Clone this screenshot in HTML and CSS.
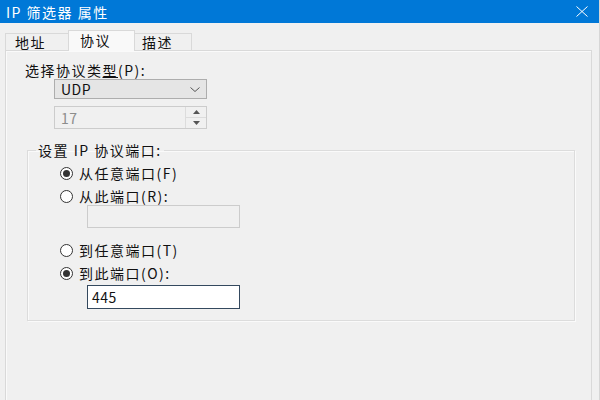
FILE: index.html
```html
<html lang="zh">
  <head>
    <meta charset="UTF-8" />
    <title>IP 筛选器 属性</title>
    <link rel="stylesheet" href="styles.css">
  </head>
  <body>
    <div class="window">
      <div class="titlebar">
        <span class="title">IP 筛选器 属性</span>
        <svg class="close" width="12" height="11" viewBox="0 0 12 11">
          <path d="M0.5 0.5 L11.5 10.5 M11.5 0.5 L0.5 10.5" stroke="#fff" stroke-width="1" fill="none" />
        </svg>
      </div>

      <div class="tabs">
        <div class="tab tab-first">地址</div>
        <div class="tab active">协议</div>
        <div class="tab tab-last">描述</div>
      </div>

      <div class="page">
        <div class="label">选择协议类<span class="key">型</span>(P):</div>

        <div class="combo">
          <span>UDP</span>
          <svg width="10" height="5" viewBox="0 0 10 5">
            <path d="M0.5 0.5 L5 4.5 L9.5 0.5" stroke="#444" stroke-width="0.9" fill="none" />
          </svg>
        </div>

        <div class="spin">
          <span class="spin-value">17</span>
          <div class="spin-btns">
            <div class="spin-btn">
              <svg width="7" height="4" viewBox="0 0 7 4"><path d="M0 4 L3.5 0 L7 4 Z" fill="#555" /></svg>
            </div>
            <div class="spin-btn">
              <svg width="7" height="4" viewBox="0 0 7 4"><path d="M0 0 L3.5 4 L7 0 Z" fill="#555" /></svg>
            </div>
          </div>
        </div>

        <fieldset class="group">
          <legend>设置 IP 协议端口:</legend>

          <div class="radio checked"><span class="circle"></span>从任意端口(F)</div>
          <div class="radio gap-small"><span class="circle"></span>从此端口(R):</div>
          <div class="textbox disabled"></div>

          <div class="radio gap-big"><span class="circle"></span>到任意端口(T)</div>
          <div class="radio checked gap-small"><span class="circle"></span>到此端口(O):</div>
          <div class="textbox focused">445</div>
        </fieldset>
      </div>
    </div>
  </body>
</html>
```

FILE: styles.css
```css
* {
  box-sizing: border-box;
}
body {
  margin: 0;
  width: 600px;
  height: 400px;
  overflow: hidden;
  background: #f0f0f0;
  font-family: "Noto Sans CJK SC", "Noto Sans", sans-serif;
  font-size: 14px;
  color: #111;
}
.window {
  width: 600px;
  height: 400px;
  border-right: 1px solid #d6d6d6;
}
.titlebar {
  height: 23px;
  background: #0078d7;
  color: #fff;
  display: flex;
  align-items: center;
  padding-left: 6px;
}
.title {
  letter-spacing: 1.5px;
  line-height: 16px;
}
.close {
  margin-left: auto;
  margin-right: 11px;
}
.tabs {
  display: flex;
  align-items: flex-end;
  height: 27px;
  padding-left: 5px;
}
.tab {
  height: 17px;
  border: 1px solid #d9d9d9;
  border-bottom: none;
  background: #f0f0f0;
  line-height: 16px;
  letter-spacing: 1.5px;
  width: 64px;
  padding-left: 9px;
}
.tab.active {
  height: 21px;
  width: 67px;
  padding-left: 11px;
  line-height: 19px;
  background: #f9f9f9;
  margin: 0 -1px -1px -1px;
  position: relative;
  z-index: 1;
}
.tab-last {
  width: 58px;
  padding-left: 7px;
}
.page {
  margin: 0 7px 0 5px;
  height: 360px;
  border: 1px solid #d9d9d9;
  box-shadow: inset 1px 1px 0 #fafafa;
  background: #f0f0f0;
  padding: 11px 0 0 19px;
}
.label {
  line-height: 16px;
  letter-spacing: 1.5px;
}
.key {
  text-decoration: underline;
}
.combo {
  margin: 1px 0 0 29px;
  width: 153px;
  height: 20px;
  background: #e5e5e5;
  border: 1px solid #adadad;
  display: flex;
  align-items: center;
  justify-content: space-between;
  padding: 0 6px 0 6px;
  letter-spacing: 0.5px;
}
.spin {
  margin: 7px 0 0 29px;
  width: 153px;
  height: 23px;
  background: #f0f0f0;
  border: 1px solid #cccccc;
  display: flex;
  align-items: center;
}
.spin-value {
  padding-left: 6px;
  color: #8c8c8c;
  letter-spacing: 0.5px;
}
.spin-btns {
  margin-left: auto;
  width: 21px;
  height: 100%;
  border-left: 1px solid #dcdcdc;
  display: flex;
  flex-direction: column;
}
.spin-btn {
  flex: 1;
  display: flex;
  align-items: center;
  justify-content: center;
}
.spin-btn + .spin-btn {
  border-top: 1px solid #dcdcdc;
}
.group {
  margin: 14px 0 0 2px;
  width: 548px;
  border: 1px solid #dcdcdc;
  box-shadow: inset 1px 1px 0 #fafafa, 1px 1px 0 #fafafa;
  padding: 7px 0 11px 0;
  min-width: 0;
}
.group legend {
  margin-left: 8px;
  padding: 0 2px;
  line-height: 15px;
  letter-spacing: 1.5px;
}
.radio {
  display: flex;
  align-items: center;
  gap: 6px;
  height: 16px;
  margin-left: 32px;
  letter-spacing: 1.5px;
}
.radio.gap-small {
  margin-top: 7px;
}
.radio.gap-big {
  margin-top: 14px;
}
.circle {
  width: 13px;
  height: 13px;
  border: 1px solid #333;
  border-radius: 50%;
  background: #fff;
  display: flex;
  align-items: center;
  justify-content: center;
}
.radio.checked .circle::after {
  content: "";
  width: 7px;
  height: 7px;
  border-radius: 50%;
  background: #333;
}
.textbox {
  margin-left: 59px;
  width: 153px;
  height: 23px;
  padding-left: 4px;
  line-height: 21px;
  letter-spacing: 0.5px;
}
.textbox.disabled {
  margin-top: 1px;
  background: #f0f0f0;
  border: 1px solid #cccccc;
}
.textbox.focused {
  margin-top: 4px;
  height: 24px;
  line-height: 22px;
  background: #fff;
  border: 1px solid #34495e;
}
```
